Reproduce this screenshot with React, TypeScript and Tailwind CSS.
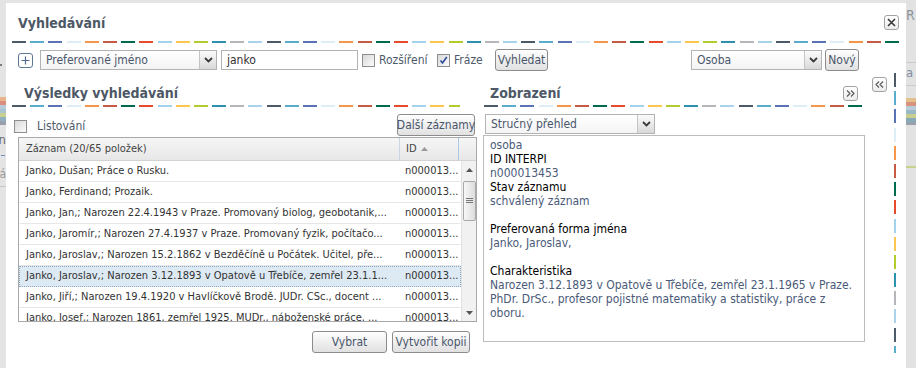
import type { ReactNode } from "react"

const DASH = [
  "bg-[#4d5a6a]",
  "bg-[#5aaccc]",
  "bg-[#5a73b4]",
  "bg-[#deeef6]",
  "bg-[#f5964b]",
  "bg-[#c85a44]",
  "bg-[#006a4e]",
  "bg-[#e84a2c]",
  "bg-[#a4d3ee]",
  "bg-[#fcc651]",
  "bg-[#b1cc2c]",
  "bg-[#2e90b1]",
  "bg-[#b6b5b9]",
  "bg-[#a9d3ea]",
]

const rows = [
  "Janko, Dušan; Práce o Rusku.",
  "Janko, Ferdinand; Prozaik.",
  "Janko, Jan,; Narozen 22.4.1943 v Praze. Promovaný biolog, geobotanik,...",
  "Janko, Jaromír,; Narozen 27.4.1937 v Praze. Promovaný fyzik, počítačo...",
  "Janko, Jaroslav,; Narozen 15.2.1862 v Bezděčíně u Počátek. Učitel, pře...",
  "Janko, Jaroslav,; Narozen 3.12.1893 v Opatově u Třebíče, zemřel 23.1.1...",
  "Janko, Jiří,; Narozen 19.4.1920 v Havlíčkově Brodě. JUDr. CSc., docent ...",
  "Janko, Josef,; Narozen 1861, zemřel 1925. MUDr., náboženské práce, ...",
]

const SELECTED = 5

function Dashes({ count, className = "" }: { count: number; className?: string }) {
  return (
    <div className={"flex h-[2px] gap-[4.2px] overflow-hidden shrink-0 " + className}>
      {Array.from({ length: count }).map((_, i) => (
        <span key={i} className={"h-full w-[14px] shrink-0 " + DASH[i % DASH.length]} />
      ))}
    </div>
  )
}

function VDashes({ count, className = "" }: { count: number; className?: string }) {
  return (
    <div className={"flex w-[2px] flex-col gap-[4.2px] overflow-hidden shrink-0 " + className}>
      {Array.from({ length: count }).map((_, i) => (
        <span key={i} className={"w-full h-[14px] shrink-0 " + DASH[i % DASH.length]} />
      ))}
    </div>
  )
}

function Select({ value, className = "" }: { value: string; className?: string }) {
  return (
    <div className={"flex h-[20px] border border-[#b3b3b3] bg-linear-to-b from-white to-[#f4f4f4] shrink-0 " + className}>
      <div className="flex flex-1 items-center truncate pl-[5px] text-[12px] text-[#49566a]">{value}</div>
      <div className="flex w-[17px] items-center justify-center border-l border-[#c4c4c4] bg-linear-to-b from-[#fbfbfb] to-[#d9d9d9]">
        <svg width="9" height="6" viewBox="0 0 9 6">
          <path d="M1 1l3.5 3.5L8 1" fill="none" stroke="#3a3a3a" strokeWidth="1.8" />
        </svg>
      </div>
    </div>
  )
}

function Btn({ children, className = "" }: { children: ReactNode; className?: string }) {
  return (
    <button className={"flex h-[22px] items-center justify-center whitespace-nowrap rounded-[3px] border border-[#8c8c8c] bg-linear-to-b from-[#fefefe] to-[#e1e1e1] text-[12px] leading-none text-[#49566a] shadow-[inset_0_1px_0_#fff] shrink-0 " + className}>
      {children}
    </button>
  )
}

function Check({ checked = false }: { checked?: boolean }) {
  return (
    <span className="flex h-[13px] w-[13px] shrink-0 items-center justify-center border border-[#8e8e8e] bg-linear-to-br from-[#d9d9d9] to-[#fbfbfb]">
      {checked && (
        <svg width="9" height="9" viewBox="0 0 9 9">
          <path d="M1.5 4.5l2 2.5L7.8 1" fill="none" stroke="#2b4d9a" strokeWidth="1.6" />
        </svg>
      )}
    </span>
  )
}

function SmallBtn({ children, className = "" }: { children: ReactNode; className?: string }) {
  return (
    <span className={"flex h-[15px] w-[15px] shrink-0 items-center justify-center rounded-[3px] border border-[#a3a3a3] bg-linear-to-b from-white to-[#ececec] " + className}>
      {children}
    </span>
  )
}

function LeftStrip() {
  return (
    <div className="flex w-[6px] shrink-0 flex-col overflow-hidden">
      <div className="h-[64px]" />
      <div className="h-[2px] w-[2px] bg-[#7a7a7a]" />
      <div className="h-[31px]" />
      <div className="h-[4px] bg-[#e9b48c]" />
      <div className="h-[4px] bg-[#d98e7e]" />
      <div className="h-[4px] bg-[#b8cad8]" />
      <div className="h-[4px] bg-[#a9c3cf]" />
      <div className="h-[4px] bg-[#c9cf8e]" />
      <div className="h-[4px] bg-[#8fb1c0]" />
      <div className="h-[4px] bg-[#9aa0ab]" />
      <div className="flex h-[21px] items-end justify-end text-[13px] leading-none text-[#6a6a6a]">n</div>
      <div className="mt-[9px] ml-[1px] h-[1px] w-[4px] bg-[#6f8fb8]" />
      <div className="mt-[12px] flex justify-end whitespace-nowrap text-[12px] leading-none text-[#9a9a9a]">Zá</div>
      <div className="mt-[6px] h-[1px] bg-[#c9c9c9]" />
    </div>
  )
}

function RightStrip() {
  return (
    <div className="flex w-[10px] shrink-0 flex-col overflow-hidden bg-[#e2e2e2]">
      <div className="mt-[8px] whitespace-nowrap text-[14px] leading-none text-[#8d949c]">R</div>
      <div className="mt-[40px] h-[1px] bg-[#cacaca]" />
      <div className="mt-[3px] whitespace-nowrap text-[13px] leading-none text-[#7f8ea3]">a</div>
      <div className="mt-[6px] h-[1px] bg-[#cacaca]" />
      <div className="mt-[12px] h-[4px] bg-[#e4c08e]" />
      <div className="h-[4px] bg-[#d8937f]" />
      <div className="h-[4px] bg-[#b9ccd9]" />
      <div className="h-[4px] bg-[#9bb8c6]" />
      <div className="h-[4px] bg-[#c8cf8c]" />
      <div className="h-[4px] bg-[#88a9b8]" />
      <div className="h-[3px] bg-[#9aa0ab]" />
      <div className="mt-[41px] h-[2px] bg-[#c6d18c]" />
    </div>
  )
}

function ResultsGrid() {
  return (
    <div className="ml-[6px] mt-[2px] flex h-[185px] w-[459px] flex-col overflow-hidden border border-[#a9a9a9] bg-white">
      <div className="flex h-[23px] shrink-0 border-b border-[#d3d3d3] bg-linear-to-b from-[#f6f6f6] to-[#e7e7e7] text-[11px] text-[#444]">
        <div className="flex w-[381px] items-center border-r border-[#c9d6e3] pl-[7px]">Záznam (20/65 položek)</div>
        <div className="flex w-[59px] items-center gap-[4px] border-r border-[#a9c8e8] pl-[6px]">
          ID
          <svg width="7" height="4" viewBox="0 0 7 4">
            <path d="M0 4L3.5 0 7 4z" fill="#9a9a9a" />
          </svg>
        </div>
      </div>
      <div className="flex flex-1 overflow-hidden">
        <div className="flex w-[443px] flex-col">
          {rows.map((r, i) => (
            <div
              key={i}
              className={
                i === SELECTED
                  ? "flex h-[21px] shrink-0 items-center border border-dotted border-[#8aa6c0] bg-[#dde9f3] text-[11px] text-[#333]"
                  : "flex h-[21px] shrink-0 items-center border-b border-[#e6e6e6] border-x border-x-white text-[11px] text-[#333]"
              }
            >
              <div className="w-[380px] truncate whitespace-nowrap pl-[6px]">{r}</div>
              <div className="w-[59px] truncate whitespace-nowrap pl-[5px]">n000013...</div>
            </div>
          ))}
        </div>
        <div className="flex w-[15px] flex-col items-center border-l border-[#e2e2e2] bg-[#f1f1f1]">
          <div className="flex h-[18px] items-center justify-center">
            <svg width="7" height="4" viewBox="0 0 7 4">
              <path d="M0 4L3.5 0 7 4z" fill="#555" />
            </svg>
          </div>
          <div className="mt-[2px] flex h-[40px] w-[13px] items-center justify-center rounded-[2px] border border-[#a9a9a9] bg-linear-to-r from-[#f7f7f7] to-[#dcdcdc]">
            <svg width="7" height="6" viewBox="0 0 7 6">
              <path d="M0 0.5h7M0 2.5h7M0 4.5h7" stroke="#777" strokeWidth="1" />
            </svg>
          </div>
          <div className="flex-1" />
          <div className="flex h-[14px] items-start justify-center pt-[4px]">
            <svg width="7" height="4" viewBox="0 0 7 4">
              <path d="M0 0L3.5 4 7 0z" fill="#555" />
            </svg>
          </div>
        </div>
      </div>
    </div>
  )
}

function Detail() {
  const label = "text-black"
  const value = "text-[#4a5a78]"
  return (
    <div className="mt-[1px] h-[207px] w-[382px] shrink-0 border border-[#bcbcbc] bg-white pl-[6px] pt-[2px] text-[12px] leading-[14px] whitespace-nowrap">
      <div className={value}>osoba</div>
      <div className={label}>ID INTERPI</div>
      <div className={value}>n000013453</div>
      <div className={label}>Stav záznamu</div>
      <div className={value}>schválený záznam</div>
      <div className="h-[14px]" />
      <div className={label}>Preferovaná forma jména</div>
      <div className={value}>Janko, Jaroslav,</div>
      <div className="h-[14px]" />
      <div className={label}>Charakteristika</div>
      <div className={value}>Narozen 3.12.1893 v Opatově u Třebíče, zemřel 23.1.1965 v Praze.</div>
      <div className={value}>PhDr. DrSc., profesor pojistné matematiky a statistiky, práce z</div>
      <div className={value}>oboru.</div>
    </div>
  )
}

export default function App() {
  return (
    <div className="flex h-[368px] w-[916px] overflow-hidden bg-[#e4e4e4] font-['DejaVu_Sans_Condensed','Liberation_Sans',sans-serif] text-[12px]">
      <LeftStrip />

      <div className="mt-[3px] flex h-[365px] w-[900px] shrink-0 flex-col bg-white px-[6px]">
        {/* title bar */}
        <div className="flex h-[38px] shrink-0 items-center justify-between">
          <div className="pl-[6px] pt-[2px] text-[14px] font-bold text-[#4d5866]">Vyhledávání</div>
          <SmallBtn className="mr-[1px]">
            <svg width="9" height="9" viewBox="0 0 9 9">
              <path d="M1 1l7 7M8 1L1 8" stroke="#333" strokeWidth="1.5" />
            </svg>
          </SmallBtn>
        </div>
        <Dashes count={50} className="w-[888px]" />

        {/* search bar */}
        <div className="mt-[6px] flex h-[22px] shrink-0 items-center">
          <span className="ml-[6px] flex h-[15px] w-[15px] shrink-0 items-center justify-center rounded-[3px] border border-[#5f7797]">
            <svg width="9" height="9" viewBox="0 0 9 9">
              <path d="M4.5 0.5v8M0.5 4.5h8" stroke="#4f6a8e" strokeWidth="1.2" />
            </svg>
          </span>
          <Select value="Preferované jméno" className="ml-[7px] w-[177px]" />
          <div className="ml-[4px] flex h-[20px] w-[137px] shrink-0 items-center border border-[#b3b3b3] pl-[5px] text-[12px] text-[#333]">janko</div>
          <span className="ml-[4px]"><Check /></span>
          <span className="ml-[4px] w-[52px] text-[12px] text-[#4d5a6a]">Rozšíření</span>
          <span className="ml-[6px]"><Check checked /></span>
          <span className="ml-[4px] w-[33px] text-[12px] text-[#4d5a6a]">Fráze</span>
          <Btn className="ml-[8px] w-[53px]">Vyhledat</Btn>
          <div className="flex-1" />
          <Select value="Osoba" className="w-[131px]" />
          <Btn className="ml-[3px] mr-[41px] w-[34px]">Nový</Btn>
        </div>

        {/* body */}
        <div className="flex flex-1">
          {/* left column */}
          <div className="flex w-[465px] shrink-0 flex-col">
            <div className="h-[34px] shrink-0 pl-[12px] pt-[13px] text-[14px] font-bold leading-[18px] text-[#4d5866]">Výsledky vyhledávání</div>
            <Dashes count={25} className="w-[448px]" />
            <div className="mt-[7px] flex h-[21px] shrink-0 items-center">
              <span className="ml-[2px] mt-[3px]"><Check /></span>
              <span className="ml-[10px] mt-[2px] text-[12px] text-[#4d5a6a]">Listování</span>
              <div className="flex-1" />
              <Btn className="mr-[2px] w-[78px] text-[11.5px]">Další záznamy</Btn>
            </div>
            <ResultsGrid />
            <div className="mt-[9px] flex justify-end gap-[5px] pr-[7px]">
              <Btn className="w-[75px]">Vybrat</Btn>
              <Btn className="w-[78px]">Vytvořit kopii</Btn>
            </div>
          </div>

          {/* right column */}
          <div className="ml-[6px] flex w-[382px] shrink-0 flex-col">
            <div className="flex h-[34px] shrink-0 items-start justify-between">
              <div className="pl-[7px] pt-[13px] text-[14px] font-bold leading-[18px] text-[#4d5866]">Zobrazení</div>
              <SmallBtn className="mr-[7px] mt-[15px] h-[14px]">
                <svg width="9" height="7" viewBox="0 0 9 7">
                  <path d="M1 0.5l3 3-3 3M5 0.5l3 3-3 3" fill="none" stroke="#555" strokeWidth="1.1" />
                </svg>
              </SmallBtn>
            </div>
            <Dashes count={21} className="ml-[1px] w-[381px]" />
            <Select value="Stručný přehled" className="ml-[2px] mt-[7px] w-[170px]" />
            <Detail />
          </div>

          {/* collapse strip */}
          <div className="flex flex-1 items-start">
            <SmallBtn className="ml-[7px] mt-[6px] h-[14px] w-[14px]">
              <svg width="9" height="7" viewBox="0 0 9 7">
                <path d="M4 0.5l-3 3 3 3M8 0.5l-3 3 3 3" fill="none" stroke="#555" strokeWidth="1.1" />
              </svg>
            </SmallBtn>
            <VDashes count={16} className="ml-[7px] mt-[2px] h-[280px]" />
          </div>
        </div>
      </div>

      <RightStrip />
    </div>
  )
}
